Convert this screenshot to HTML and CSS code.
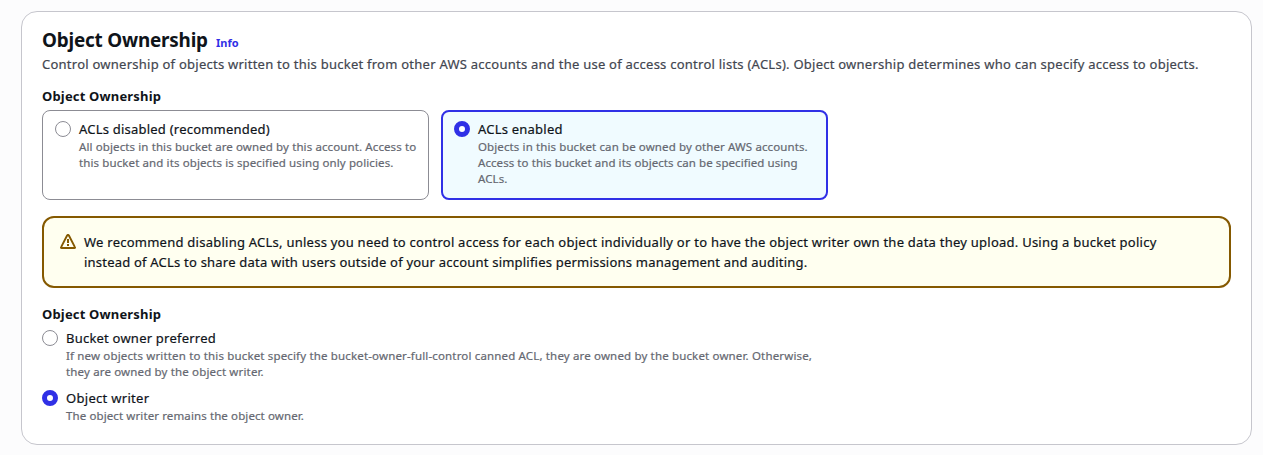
FILE: index.html
```html
<!DOCTYPE html>
<html lang="en">
<head>
<meta charset="utf-8">
<title>Object Ownership</title>
<link rel="stylesheet" href="styles.css">
</head>
<body>
<section class="panel">
  <header class="head">
    <h2 class="title">Object Ownership</h2>
    <a class="info">Info</a>
  </header>
  <p class="desc">Control ownership of objects written to this bucket from other AWS accounts and the use of access control lists (ACLs). Object ownership determines who can specify access to objects.</p>

  <div class="label">Object Ownership</div>
  <div class="tiles">
    <div class="tile">
      <span class="radio"></span>
      <div class="option">
        <div class="name">ACLs disabled (recommended)</div>
        <div class="hint">All objects in this bucket are owned by this account. Access to<br>this bucket and its objects is specified using only policies.</div>
      </div>
    </div>
    <div class="tile tile-on">
      <span class="radio radio-on"></span>
      <div class="option">
        <div class="name">ACLs enabled</div>
        <div class="hint">Objects in this bucket can be owned by other AWS accounts.<br><span class="tight">Access to this bucket and its objects can be specified using</span><br>ACLs.</div>
      </div>
    </div>
  </div>

  <div class="alert">
    <svg class="warn" viewBox="0 0 16 16" width="16" height="16"><path d="M7.1 1.5 1.1 13.1Q.6 14 1.6 14H14.4Q15.4 14 14.9 13.1L8.9 1.5Q8 .3 7.1 1.5Z" fill="none" stroke="currentColor" stroke-width="1.9" stroke-linejoin="round"/><path d="M8 5v4M8 10v2" fill="none" stroke="currentColor" stroke-width="2"/></svg>
    <p class="alert-text">We recommend disabling ACLs, unless you need to control access for each object individually or to have the object writer own the data they upload. Using a bucket policy<br><span class="second">instead of ACLs to share data with users outside of your account simplifies permissions management and auditing.</span></p>
  </div>

  <div class="label">Object Ownership</div>
  <div class="choices">
    <div class="choice">
      <span class="radio"></span>
      <div class="option">
        <div class="name">Bucket owner preferred</div>
        <div class="hint hint-wide">If new objects written to this bucket specify the bucket-owner-full-control canned ACL, they are owned by the bucket owner. Otherwise,<br>they are owned by the object writer.</div>
      </div>
    </div>
    <div class="choice">
      <span class="radio radio-on"></span>
      <div class="option">
        <div class="name name-short">Object writer</div>
        <div class="hint">The object writer remains the object owner.</div>
      </div>
    </div>
  </div>
</section>
</body>
</html>
```
FILE: styles.css
```css
* { box-sizing: border-box; margin: 0; padding: 0; }
body {
  background: #fcfcfd;
  color: #0f141a;
  font: 13px/20px "Noto Sans", "Open Sans", sans-serif;
  height: 455px;
  overflow: hidden;
  padding: 11px 11px 0 21px;
  white-space: nowrap;
}
.panel {
  height: 434px;
  padding: 16px 20px;
  background: #fff;
  border: 1px solid #c6c6cd;
  border-radius: 16px;
}
.head { display: flex; align-items: baseline; gap: 8px; height: 26px; }
.title { width: 166px; font-size: 20px; line-height: 24px; font-weight: 700; letter-spacing: -0.2px; transform: scaleX(0.943); transform-origin: left; }
.info { color: #3030e6; font-size: 11px; font-weight: 700; }
.desc, .name, .hint, .alert-text { -webkit-text-stroke: 0.2px currentColor; }
.desc { color: #424650; letter-spacing: 0.247px; }
.label { font-weight: 700; margin-top: 12px; line-height: 20px; letter-spacing: 0.17px; }
.tiles { display: flex; gap: 12px; margin-top: 4px; }
.tile {
  display: flex;
  gap: 8px;
  width: 387px;
  height: 90px;
  padding: 8px 12px;
  border: 1px solid #8c8c94;
  border-radius: 8px;
}
.tile-on { border: 2px solid #3030e6; background: #f0fbff; padding: 7px 11px; }
.radio {
  flex: none;
  width: 16px;
  height: 16px;
  margin-top: 2px;
  border: 1px solid #8c8c94;
  border-radius: 50%;
  background: #fff;
}
.radio-on { border: 5px solid #3030e6; }
.name { letter-spacing: 0.22px; }
.name-short { letter-spacing: 0.3px; }
.hint { color: #656871; font-size: 11.5px; line-height: 16px; letter-spacing: 0.11px; }
.tight { letter-spacing: 0.07px; }
.hint-wide { letter-spacing: 0.157px; }
.alert {
  display: flex;
  gap: 8px;
  height: 72px;
  margin: 16px 0;
  padding: 14px 16px;
  border: 2px solid #855900;
  border-radius: 12px;
  background: #fffff0;
}
.alert-text { letter-spacing: 0.246px; }
.second { letter-spacing: 0.21px; }
.warn { flex: none; margin-top: 2px; color: #855900; }
.choices { display: grid; gap: 8px; margin-top: 4px; }
.choice { display: flex; gap: 8px; }
```
